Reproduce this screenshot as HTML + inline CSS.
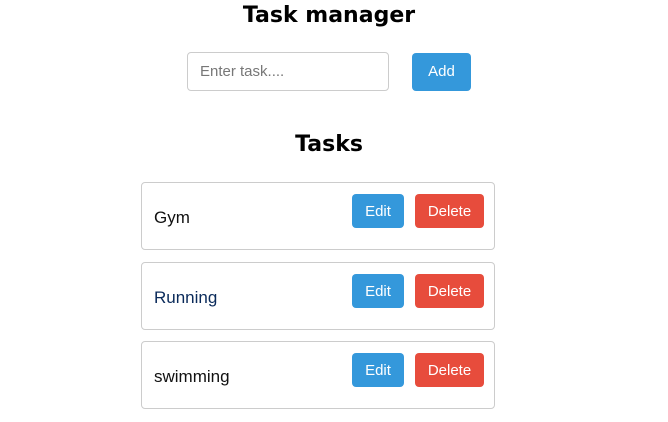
<!DOCTYPE html>
<html><head><style>
body{margin:0;width:668px;height:422px;background:#fff;font-family:"Liberation Sans",sans-serif;position:relative;overflow:hidden}
.a{position:absolute}
h1,h2{margin:0;position:absolute;left:0;width:658px;text-align:center;font-weight:bold;font-family:"DejaVu Sans","Liberation Sans",sans-serif}
h1{top:1px;font-size:22px;line-height:30px}
h2{top:130px;font-size:22px;line-height:30px}
.inp{left:187px;top:52px;width:200px;height:37px;border:1px solid #ccc;border-radius:4px;color:#777;font-size:15px;line-height:38px}
.inp span{margin-left:12px}
.btn{color:#fff;font-size:15px;text-align:center;border-radius:4px;box-sizing:border-box}
.add{left:412px;top:53px;width:59px;height:38px;line-height:38px;background:#3498db}
.item{left:141px;width:352px;height:66px;border:1px solid #ccc;border-radius:4px}
.name{position:absolute;left:12px;top:25px;font-size:17px;font-family:"Liberation Sans",sans-serif;color:#111}
.edit{left:210px;top:11px;width:52px;height:34px;line-height:34px;padding-top:1px;background:#3498db}
.del{left:273px;top:11px;width:69px;height:34px;line-height:34px;padding-top:1px;background:#e74c3c}
</style></head><body>
<h1>Task manager</h1>
<div class="a inp"><span>Enter task....</span></div>
<div class="a btn add">Add</div>
<h2>Tasks</h2>
<div class="a item" style="top:182px"><div class="name">Gym</div><div class="a btn edit">Edit</div><div class="a btn del">Delete</div></div>
<div class="a item" style="top:262px"><div class="name" style="color:#0a2a5a">Running</div><div class="a btn edit">Edit</div><div class="a btn del">Delete</div></div>
<div class="a item" style="top:341px"><div class="name">swimming</div><div class="a btn edit">Edit</div><div class="a btn del">Delete</div></div>
</body></html>
